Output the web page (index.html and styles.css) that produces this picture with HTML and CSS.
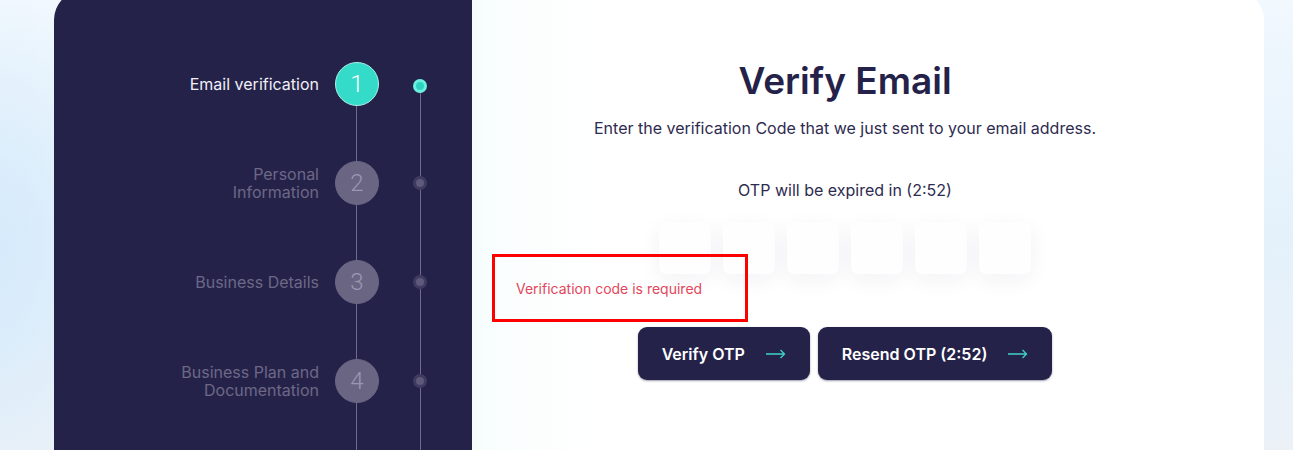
FILE: index.html
```html
<!DOCTYPE html>
<html lang="en">
  <head>
    <meta charset="UTF-8" />
    <meta name="viewport" content="width=device-width, initial-scale=1.0" />
    <title>Verify Email</title>
    <link rel="stylesheet" href="styles.css">
  </head>
  <body>
    <div class="card">
      <div class="sidebar">
        <div class="steps">
          <div class="step active">
            <div class="step-label">Email verification</div>
            <div class="step-num">1</div>
            <div class="step-dot"></div>
          </div>
          <div class="step">
            <div class="step-label">Personal<br />Information</div>
            <div class="step-num">2</div>
            <div class="step-dot"></div>
          </div>
          <div class="step">
            <div class="step-label">Business Details</div>
            <div class="step-num">3</div>
            <div class="step-dot"></div>
          </div>
          <div class="step">
            <div class="step-label">Business Plan and<br />Documentation</div>
            <div class="step-num">4</div>
            <div class="step-dot"></div>
          </div>
        </div>
      </div>
      <div class="main">
        <h1>Verify Email</h1>
        <p class="subtitle">Enter the verification Code that we just sent to your email address.</p>
        <p class="timer">OTP will be expired in (2:52)</p>
        <form id="otpForm">
          <div class="otp-row">
            <input class="otp-box" type="text" maxlength="1" />
            <input class="otp-box" type="text" maxlength="1" />
            <input class="otp-box" type="text" maxlength="1" />
            <input class="otp-box" type="text" maxlength="1" />
            <input class="otp-box" type="text" maxlength="1" />
            <input class="otp-box" type="text" maxlength="1" />
          </div>
          <div class="error">Verification code is required</div>
          <div class="actions">
            <button type="submit" class="btn">
              Verify OTP
              <svg width="20" height="10" viewBox="0 0 20 10"><path d="M0 5h18.5M14.5 1l4 4-4 4" fill="none" stroke="#3dd3c3" stroke-width="1.3" /></svg>
            </button>
            <button type="button" class="btn">
              Resend OTP (2:52)
              <svg width="20" height="10" viewBox="0 0 20 10"><path d="M0 5h18.5M14.5 1l4 4-4 4" fill="none" stroke="#3dd3c3" stroke-width="1.3" /></svg>
            </button>
          </div>
        </form>
      </div>
    </div>
  </body>
</html>
```

FILE: styles.css
```css
body {
  margin: 0;
  font-family: Inter, "Liberation Sans", sans-serif;
  color: #25224a;
  background:
    radial-gradient(ellipse 120px 260px at 0 250px, #d5eafb, transparent),
    linear-gradient(180deg, #f1f8fe 0%, #e4f1fb 45%, #eef1f6 100%);
  overflow: hidden;
}
.card {
  display: flex;
  width: 1210px;
  min-height: 480px;
  margin: -10px 0 0 54px;
  border-radius: 30px 30px 0 0;
  overflow: hidden;
}
.sidebar {
  width: 418px;
  flex-shrink: 0;
  background-color: #25224a;
}
.steps {
  display: flex;
  flex-direction: column;
  gap: 55px;
  padding-top: 72px;
  min-height: 460px;
  background:
    linear-gradient(#706b8a, #706b8a) 302px 94px / 1px 100% no-repeat,
    linear-gradient(#706b8a, #706b8a) 366px 94px / 1px 100% no-repeat;
}
.step {
  display: flex;
  align-items: center;
  height: 44px;
}
.step-label {
  width: 265px;
  text-align: right;
  font-size: 16px;
  line-height: 18px;
  color: #6c6886;
}
.step-num {
  width: 44px;
  height: 44px;
  margin-left: 16px;
  box-sizing: border-box;
  border: 1px solid #6a6583;
  border-radius: 50%;
  background-color: #6a6583;
  color: #9c97b0;
  font-family: Roboto, sans-serif;
  font-size: 24px;
  font-weight: 300;
  display: flex;
  align-items: center;
  justify-content: center;
}
.step-dot {
  width: 14px;
  height: 14px;
  margin-left: 34px;
  box-sizing: border-box;
  border: 3px solid #3f3b60;
  border-radius: 50%;
  background-color: #5f5a7b;
}
.step.active .step-label {
  color: #f0eff6;
}
.step.active .step-num {
  background-color: #35dbc9;
  border-color: #a9f1e8;
  color: #ffffff;
}
.step.active .step-dot {
  margin-top: 4px;
  border-color: #6af1de;
  background-color: #2fd2c0;
}
.main {
  flex: 1;
  padding: 69px 66px 0 20px;
  background: linear-gradient(90deg, #f6fcfc 0, #fbfefe 40px, #ffffff 140px);
  text-align: center;
}
h1 {
  margin: 0;
  font-size: 37px;
  line-height: 44px;
  font-weight: 600;
}
.subtitle {
  margin: 13px 0 0;
  font-size: 16px;
  line-height: 24px;
  color: #2e2b50;
}
.timer {
  margin: 38px 0 0;
  font-size: 16px;
  line-height: 24px;
  color: #2e2b50;
}
form {
  margin-top: 20px;
}
.otp-row {
  display: flex;
  justify-content: center;
  gap: 12px;
}
.otp-box {
  width: 52px;
  height: 52px;
  box-sizing: border-box;
  border: none;
  border-radius: 7px;
  background-color: #fefeff;
  box-shadow: 0 6px 22px rgba(40, 40, 80, 0.06);
  text-align: center;
  font-size: 20px;
}
.error {
  width: 256px;
  height: 68px;
  box-sizing: border-box;
  margin-top: -20px;
  padding: 22px 0 0 21px;
  border: 3px solid #ff0000;
  text-align: left;
  font-size: 14px;
  line-height: 20px;
  color: #e2475b;
  position: relative;
}
.actions {
  display: flex;
  justify-content: center;
  gap: 8px;
  margin-top: 5px;
}
.btn {
  display: flex;
  align-items: center;
  gap: 21px;
  height: 53px;
  padding: 0 24px;
  border: none;
  border-radius: 9px;
  background-color: #25224a;
  box-shadow: 0 1px 2px rgba(37, 34, 74, 0.45);
  color: #ffffff;
  font-family: inherit;
  font-size: 16px;
  font-weight: 600;
  cursor: pointer;
}
```
